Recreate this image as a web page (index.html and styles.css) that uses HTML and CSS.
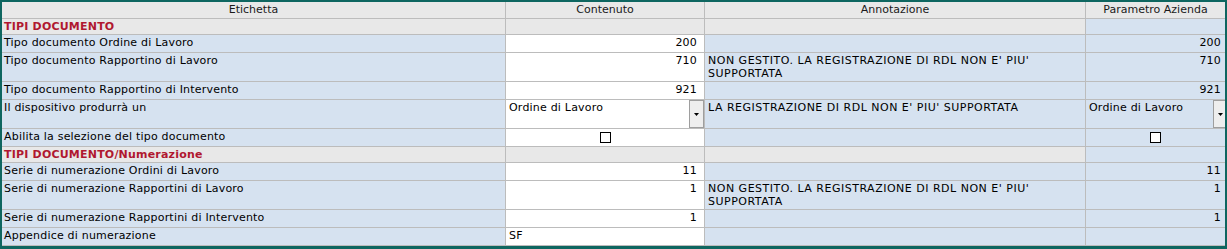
FILE: index.html
```html
<!DOCTYPE html>
<html lang="it">
<head>
<meta charset="utf-8">
<title>Tipi documento</title>
<link rel="stylesheet" href="styles.css">
</head>
<body>
<div class="frame">
  <div class="row hd">
    <div class="cell">Etichetta</div>
    <div class="cell">Contenuto</div>
    <div class="cell">Annotazione</div>
    <div class="cell">Parametro Azienda</div>
  </div>

  <div class="row sec">
    <div class="cell title">TIPI DOCUMENTO</div>
    <div class="cell"></div>
    <div class="cell"></div>
    <div class="cell param"></div>
  </div>

  <div class="row">
    <div class="cell label">Tipo documento Ordine di Lavoro</div>
    <div class="cell value num">200</div>
    <div class="cell note"></div>
    <div class="cell param num">200</div>
  </div>

  <div class="row tall">
    <div class="cell label">Tipo documento Rapportino di Lavoro</div>
    <div class="cell value num">710</div>
    <div class="cell note">NON GESTITO. LA REGISTRAZIONE DI RDL NON E' PIU' SUPPORTATA</div>
    <div class="cell param num">710</div>
  </div>

  <div class="row">
    <div class="cell label">Tipo documento Rapportino di Intervento</div>
    <div class="cell value num">921</div>
    <div class="cell note"></div>
    <div class="cell param num">921</div>
  </div>

  <div class="row tall">
    <div class="cell label">Il dispositivo produrrà un</div>
    <div class="cell value pick">
      <div class="select">
        <span class="select-text">Ordine di Lavoro</span>
        <span class="select-btn"><svg width="5" height="3" viewBox="0 0 5 3"><polygon points="0,0 5,0 2.5,3" fill="#000"/></svg></span>
      </div>
    </div>
    <div class="cell note">LA REGISTRAZIONE DI RDL NON E' PIU' SUPPORTATA</div>
    <div class="cell param pick">
      <div class="select wide">
        <span class="select-text">Ordine di Lavoro</span>
        <span class="select-btn"><svg width="5" height="3" viewBox="0 0 5 3"><polygon points="0,0 5,0 2.5,3" fill="#000"/></svg></span>
      </div>
    </div>
  </div>

  <div class="row">
    <div class="cell label">Abilita la selezione del tipo documento</div>
    <div class="cell value center"><span class="check"></span></div>
    <div class="cell note"></div>
    <div class="cell param center"><span class="check"></span></div>
  </div>

  <div class="row sec">
    <div class="cell title">TIPI DOCUMENTO/Numerazione</div>
    <div class="cell"></div>
    <div class="cell"></div>
    <div class="cell param"></div>
  </div>

  <div class="row">
    <div class="cell label">Serie di numerazione Ordini di Lavoro</div>
    <div class="cell value num">11</div>
    <div class="cell note"></div>
    <div class="cell param num">11</div>
  </div>

  <div class="row tall">
    <div class="cell label">Serie di numerazione Rapportini di Lavoro</div>
    <div class="cell value num">1</div>
    <div class="cell note">NON GESTITO. LA REGISTRAZIONE DI RDL NON E' PIU' SUPPORTATA</div>
    <div class="cell param num">1</div>
  </div>

  <div class="row">
    <div class="cell label">Serie di numerazione Rapportini di Intervento</div>
    <div class="cell value num">1</div>
    <div class="cell note"></div>
    <div class="cell param num">1</div>
  </div>

  <div class="row">
    <div class="cell label">Appendice di numerazione</div>
    <div class="cell value">SF</div>
    <div class="cell note"></div>
    <div class="cell param"></div>
  </div>
</div>
</body>
</html>
```

FILE: styles.css
```css
* {
  box-sizing: border-box;
}

html, body {
  margin: 0;
  padding: 0;
  background: #ffffff;
}

body {
  font-family: "DejaVu Sans", Verdana, sans-serif;
  font-size: 11px;
  line-height: 13px;
  letter-spacing: 0.2px;
  color: #000000;
}

.frame {
  width: 1227px;
  height: 249px;
  border: 2px solid #0e6660;
  border-bottom-width: 3px;
  background: #d6e2f0;
  overflow: hidden;
}

.row {
  display: grid;
  grid-template-columns: 504px 199px 381px 1fr;
  height: 18px;
}

.row.hd {
  height: 17px;
}

.row.sec {
  height: 16px;
}

.row.tall {
  height: 29px;
}

.cell {
  border-bottom: 1px solid #bcbcbc;
  border-right: 1px solid #bcbcbc;
  padding: 1px 3px 0 3px;
  background: #d6e2f0;
  overflow: hidden;
  white-space: nowrap;
}

.cell:last-child {
  border-right: 0;
}

.hd .cell {
  background: #e8e8e8;
  color: #1a1a1a;
  text-align: center;
  letter-spacing: 0;
  padding-top: 1px;
}

.sec .cell {
  background: #e8e8e8;
  padding-top: 1px;
}

.sec .cell.param {
  background: #d6e2f0;
}

.title {
  color: #b01830;
  font-weight: bold;
  padding-left: 2px;
}

.label {
  padding-left: 2px;
}

.value {
  background: #ffffff;
}

.note {
  white-space: normal;
  letter-spacing: 0.5px;
  padding-right: 2px;
}

.num {
  text-align: right;
}

.value.num {
  padding-right: 7px;
}

.param.num {
  padding-right: 4px;
}

.center {
  display: flex;
  justify-content: center;
  align-items: center;
  padding: 0;
}

.check {
  display: block;
  width: 11px;
  height: 11px;
  border: 1px solid #000000;
  background: #ffffff;
}

.pick {
  padding: 0;
}

.select {
  display: flex;
  height: 100%;
  width: 100%;
}

.select.wide {
  width: calc(100% + 3px);
}

.select-text {
  flex: 1;
  padding: 1px 3px 0 3px;
}

.select-btn {
  width: 15px;
  height: 100%;
  border: 1px solid #9e9e9e;
  background: #eeeeee;
  display: flex;
  align-items: center;
  justify-content: center;
  padding-top: 1px;
}

.select-btn svg {
  display: block;
}
```
